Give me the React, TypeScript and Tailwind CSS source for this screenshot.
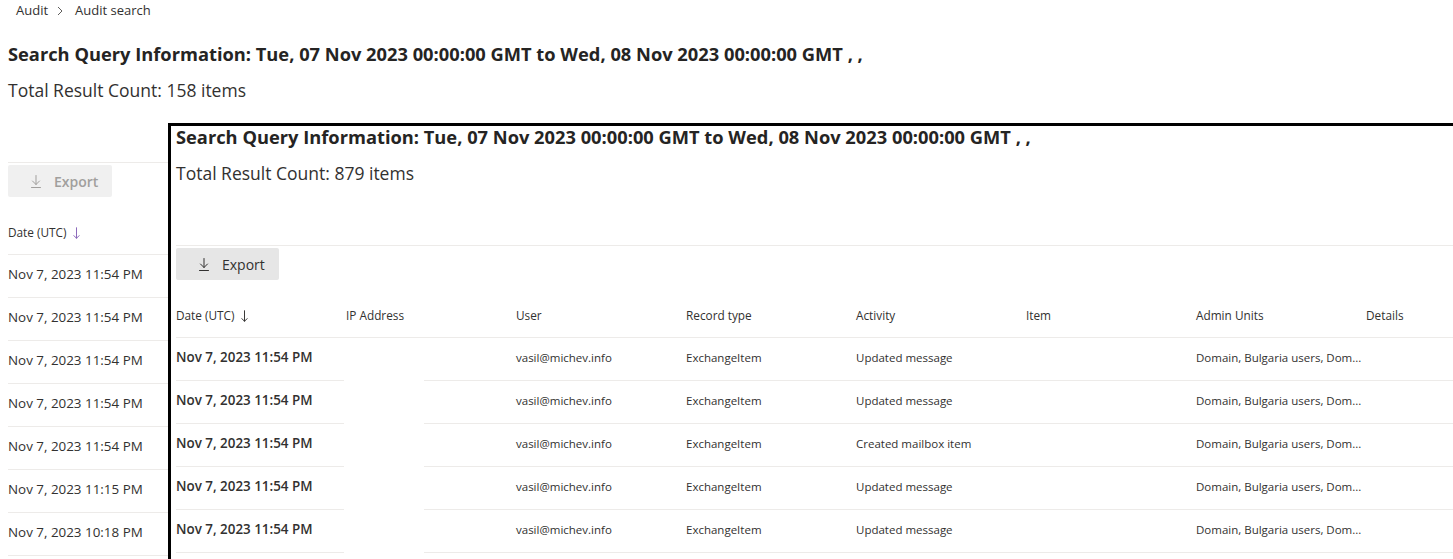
import React from 'react';

interface AuditRow {
  date: string;
  user: string;
  recordType: string;
  activity: string;
  adminUnits: string;
}

const makeRow = (date: string, activity = 'Updated message'): AuditRow => ({
  date,
  user: 'vasil@michev.info',
  recordType: 'ExchangeItem',
  activity,
  adminUnits: 'Domain, Bulgaria users, Dom...',
});

const backRows: AuditRow[] = [
  makeRow('Nov 7, 2023 11:54 PM'),
  makeRow('Nov 7, 2023 11:54 PM'),
  makeRow('Nov 7, 2023 11:54 PM'),
  makeRow('Nov 7, 2023 11:54 PM'),
  makeRow('Nov 7, 2023 11:54 PM'),
  makeRow('Nov 7, 2023 11:15 PM'),
  makeRow('Nov 7, 2023 10:18 PM'),
];

const frontRows: AuditRow[] = [
  makeRow('Nov 7, 2023 11:54 PM'),
  makeRow('Nov 7, 2023 11:54 PM'),
  makeRow('Nov 7, 2023 11:54 PM', 'Created mailbox item'),
  makeRow('Nov 7, 2023 11:54 PM'),
  makeRow('Nov 7, 2023 11:54 PM'),
];

const headers = ['IP Address', 'User', 'Record type', 'Activity', 'Item', 'Admin Units', 'Details'];

const DownloadIcon: React.FC<{ className?: string }> = ({ className }) => (
  <svg viewBox="0 0 16 16" className={className} fill="none" stroke="currentColor" strokeWidth="1" strokeLinecap="round" strokeLinejoin="round">
    <path d="M8 2.5v9" />
    <path d="M4.5 8 8 11.5 11.5 8" />
    <path d="M3.5 14.5h9" />
  </svg>
);

const SortArrow: React.FC<{ className?: string }> = ({ className }) => (
  <svg viewBox="0 0 10 16" className={className} fill="none" stroke="currentColor" strokeWidth="1.1" strokeLinecap="round" strokeLinejoin="round">
    <path d="M5 2v12" />
    <path d="M2 11l3 3 3-3" />
  </svg>
);

interface ResultsViewProps {
  count: number;
  rows: AuditRow[];
  disabled?: boolean;
  allColumns?: boolean;
  dateClass: string;
  arrowClass: string;
}

// the back page only shows its date column, the rest sits under the overlay
const ResultsView: React.FC<ResultsViewProps> = ({ count, rows, disabled, allColumns, dateClass, arrowClass }) => (
  <div className="flex flex-col">
    <h1 className="h-[22px] leading-[22px] text-[18.3px] font-bold text-[#252423] whitespace-nowrap">
      Search Query Information: Tue, 07 Nov 2023 00:00:00 GMT to Wed, 08 Nov 2023 00:00:00 GMT , ,
    </h1>
    <p className="mt-[11px] h-[28px] leading-[28px] text-[17.5px] text-[#323130] whitespace-nowrap">
      Total Result Count: {count} items
    </p>
    <div className="h-[58px]" />
    <div className="border-t border-[#edebe9]" />
    <div className="mt-[2px] flex">
      <button
        className={`flex h-[32px] items-center gap-[10px] rounded-[2px] pl-[20px] pr-[14px] text-[14px] ${
          disabled ? 'bg-[#f0f0f0] text-[#a19f9d] font-semibold' : 'bg-[#e6e6e6] text-[#323130]'
        }`}
      >
        <DownloadIcon className="h-[16px] w-[16px]" />
        Export
      </button>
    </div>
    <div className="mt-[15px] flex h-[43px] items-center border-b border-[#edebe9] text-[11.8px] text-[#323130] whitespace-nowrap">
      <div className="flex w-[168px] shrink-0 items-center gap-[5px]">
        Date (UTC)
        <SortArrow className={`h-[14px] w-[9px] ${arrowClass}`} />
      </div>
      {allColumns &&
        headers.map((h) => (
          <div key={h} className="w-[170px] shrink-0 pl-[2px]">
            {h}
          </div>
        ))}
    </div>
    {rows.map((r, i) => (
      <div key={i} className="flex h-[43px] text-[#323130] whitespace-nowrap">
        <div className={`flex w-[168px] shrink-0 items-center border-b border-[#edebe9] pb-[3px] text-[13.4px] ${dateClass}`}>
          {r.date}
        </div>
        {allColumns && (
          <>
            <div className="flex w-[170px] shrink-0">
              <div className="w-[80px]" />
              <div className="flex-1 border-b border-[#edebe9]" />
            </div>
            {[r.user, r.recordType, r.activity, '', r.adminUnits, ''].map((v, j) => (
              <div key={j} className="flex w-[170px] shrink-0 items-center border-b border-[#edebe9] pb-[3px] pl-[2px] text-[11.5px]">
                {v}
              </div>
            ))}
          </>
        )}
        <div className="flex-1 border-b border-[#edebe9]" />
      </div>
    ))}
  </div>
);

export default function App() {
  return (
    <div className="relative h-[559px] w-full overflow-hidden bg-white font-['Open_Sans',sans-serif] text-[#323130]">
      <nav className="flex h-[21px] items-center pl-[16px] text-[13px] text-[#323130]">
        <span>Audit</span>
        <svg viewBox="0 0 12 12" className="ml-[6px] h-[12px] w-[12px] text-[#605e5c]" fill="none" stroke="currentColor" strokeWidth="1">
          <path d="M4 2l4 4-4 4" />
        </svg>
        <span className="ml-[9px]">Audit search</span>
      </nav>
      <div className="mt-[22px] pl-[8px]">
        <ResultsView count={158} rows={backRows} disabled dateClass="font-normal" arrowClass="text-[#8764b8]" />
      </div>
      <div className="absolute left-[168px] top-[123px] right-[-40px] bottom-[-60px] overflow-hidden border-l-[3px] border-t-[3px] border-black bg-white pl-[5px]">
        <ResultsView count={879} rows={frontRows} allColumns dateClass="font-semibold" arrowClass="text-[#323130]" />
      </div>
    </div>
  );
}
